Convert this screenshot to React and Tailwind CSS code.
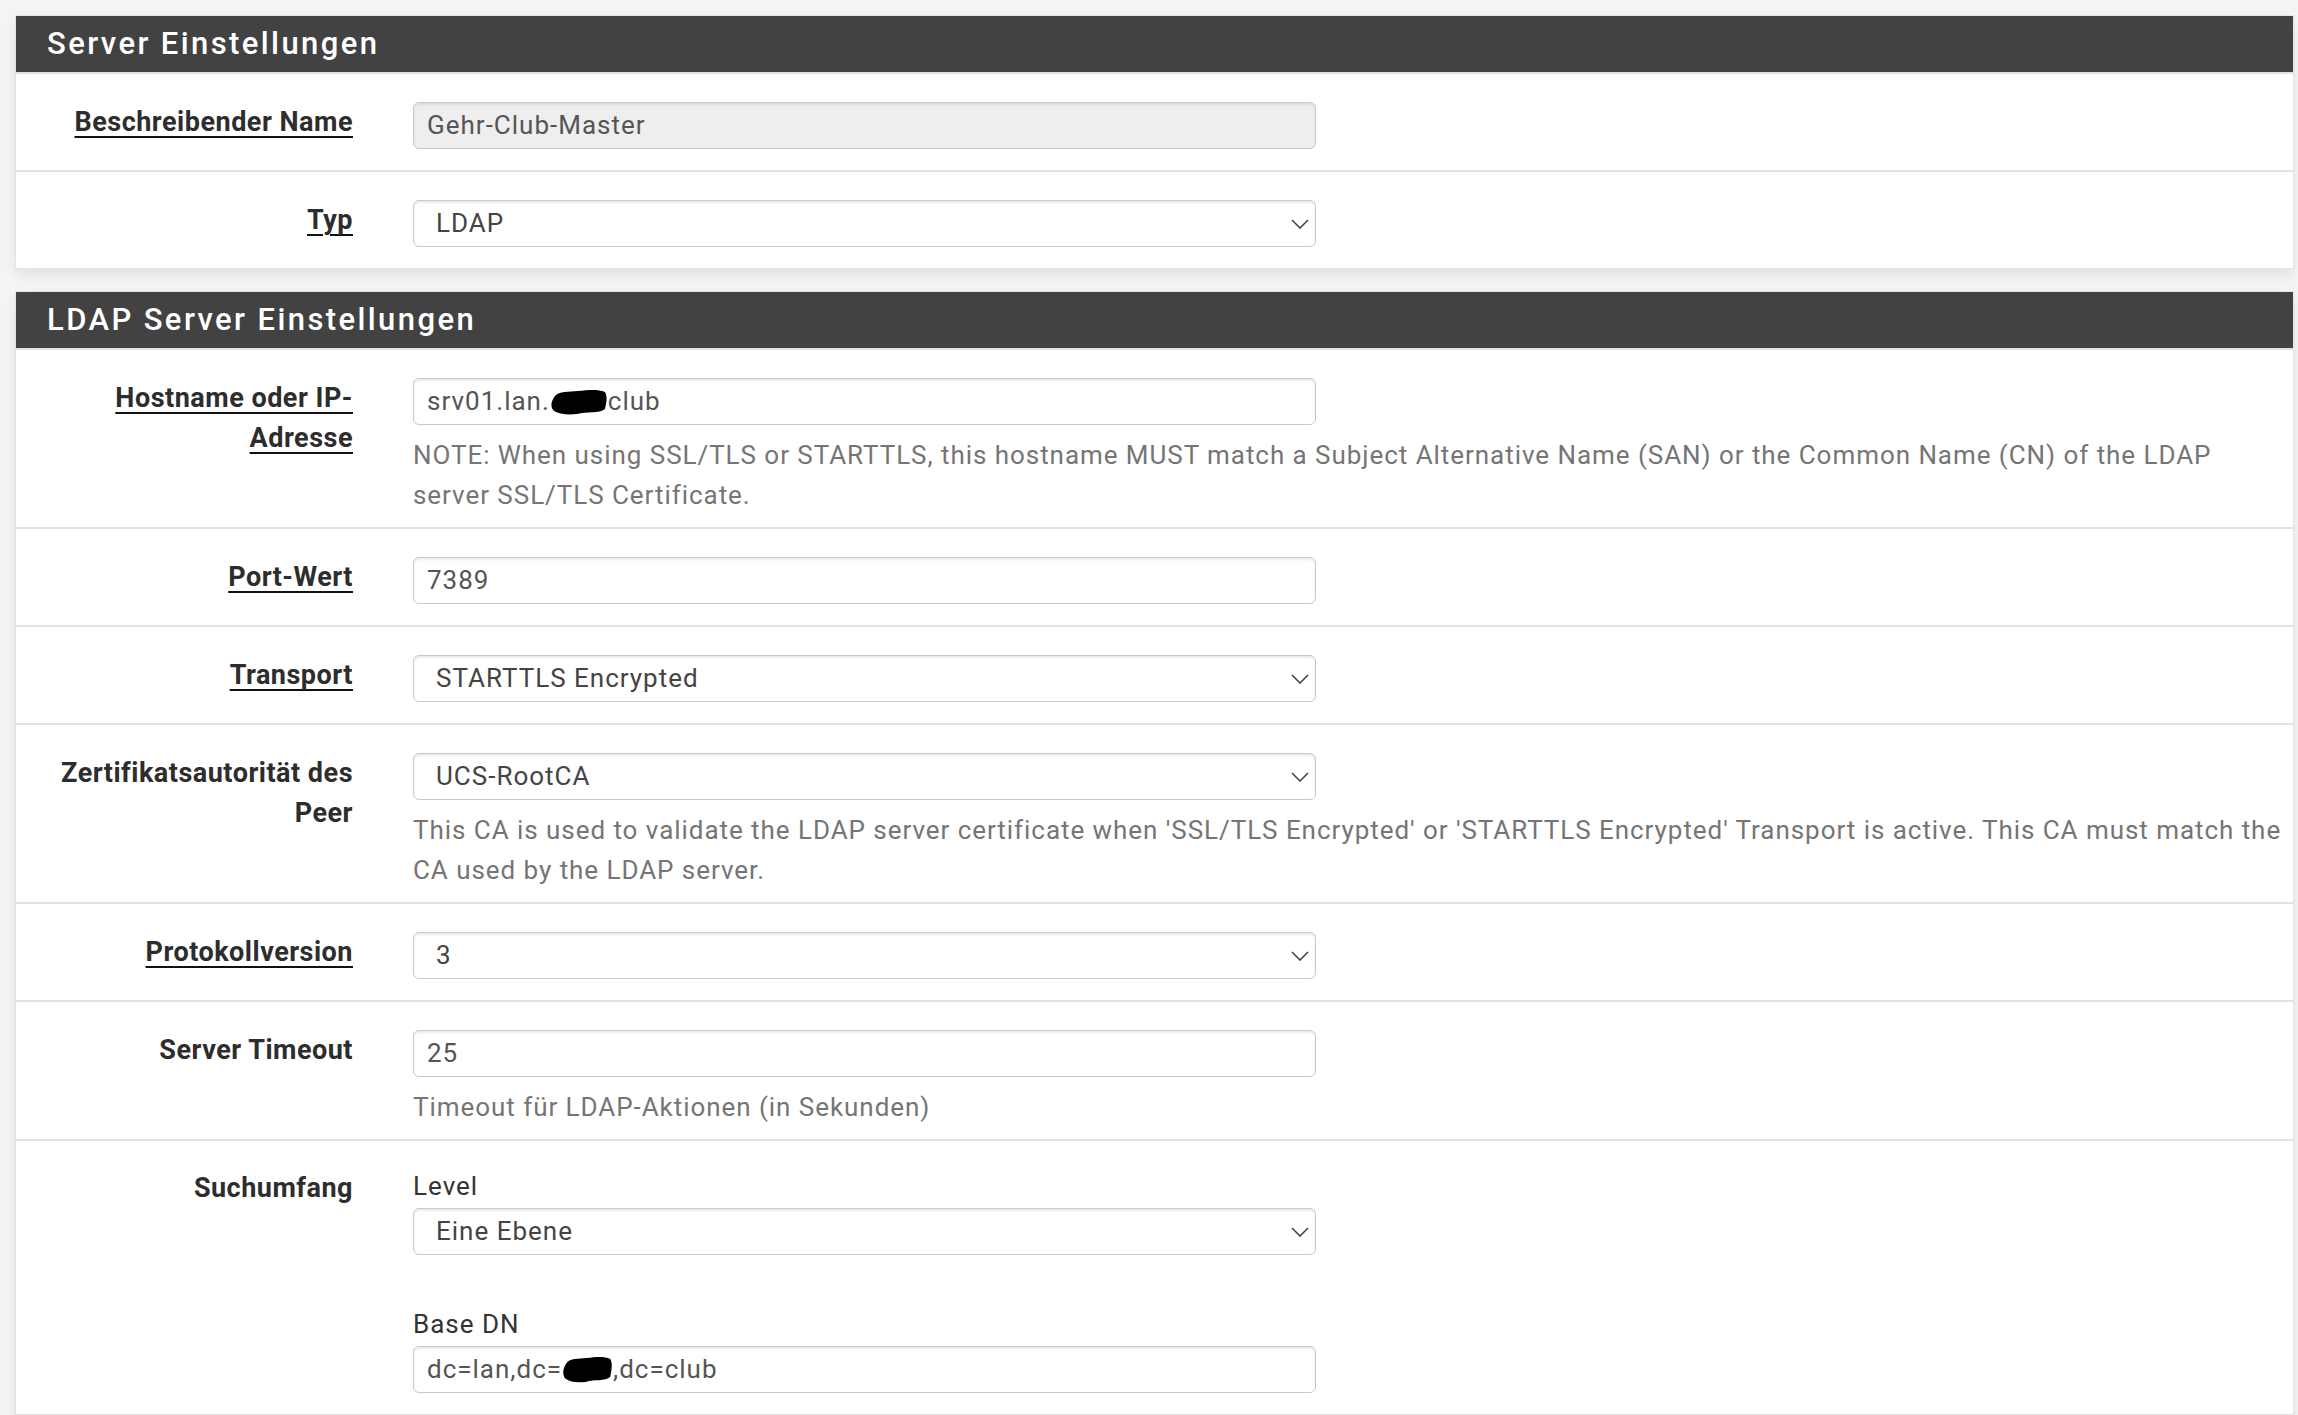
import React from "react";

function Blob({ w, h }) {
  return (
    <svg width={w} height={h} viewBox="0 0 58 26" preserveAspectRatio="none" className="inline-block shrink-0">
      <path
        d="M5 7 C9 2 19 3 28 2 C38 1 48 0 55 3 C58 8 56 15 55 20 C49 25 37 22 27 25 C17 26 9 25 4 22 C0 18 1 12 5 7 Z"
        fill="#000"
      />
    </svg>
  );
}

function Chevron() {
  return (
    <svg width="18" height="10" viewBox="0 0 18 10" className="shrink-0">
      <path d="M1 1 L9 9 L17 1" fill="none" stroke="#444" strokeWidth="1.6" />
    </svg>
  );
}

function Input({ children, disabled }) {
  return (
    <div
      className={`flex h-[47px] w-[903px] items-center whitespace-nowrap rounded-[6px] border border-[#c9c9c9] pl-[13px] text-[26px] tracking-[1px] text-[#555] shadow-[inset_0_2px_2px_rgba(0,0,0,0.08)] ${
        disabled ? "bg-[#eeeeee]" : "bg-white"
      }`}
    >
      {children}
    </div>
  );
}

function Select({ value }) {
  return (
    <div className="flex h-[47px] w-[903px] items-center justify-between rounded-[6px] border border-[#c9c9c9] bg-white pl-[14px] pr-[6px] text-[26px] tracking-[1px] text-[#444] shadow-[inset_0_2px_2px_rgba(0,0,0,0.08)]">
      <span className="pl-[8px]">{value}</span>
      <Chevron />
    </div>
  );
}

function Help({ children }) {
  return (
    <p className="mt-[10px] -mb-[9px] text-[26px] leading-[40px] tracking-[0.95px] text-[#757575]">{children}</p>
  );
}

function Row({ label, required, children, top = "pt-[28px]" }) {
  return (
    <div className={`flex border-t-2 border-[#e2e2e2] pb-[21px] ${top}`}>
      <div className="w-[337px] shrink-0 pl-[15px] text-right text-[27px] font-bold leading-[40px] tracking-[0.5px] text-[#2d2d2d]">
        {label.map((line, i) => (
          <div key={i}>
            {required ? (
              <span className="underline decoration-[#111] decoration-2 underline-offset-[5px]">{line}</span>
            ) : (
              line
            )}
          </div>
        ))}
      </div>
      <div className="ml-[60px] min-w-0 flex-1 pr-[4px]">{children}</div>
    </div>
  );
}

function Panel({ title, children }) {
  return (
    <div className="bg-white shadow-[0_6px_12px_rgba(0,0,0,0.09)] ring-1 ring-[#e4e4e4]">
      <div className="flex h-[56px] items-center bg-[#424242] px-[31px] text-[31px] font-medium tracking-[2.4px] text-white">
        {title}
      </div>
      {children}
    </div>
  );
}

export default function App() {
  return (
    <div className="min-h-screen bg-[#f4f4f4] pl-[16px] pt-[16px] font-[Roboto,sans-serif]">
      <div className="flex w-[2277px] flex-col gap-[24px]">
        <Panel title="Server Einstellungen">
          <Row label={["Beschreibender Name"]} required>
            <Input disabled>Gehr-Club-Master</Input>
          </Row>
          <Row label={["Typ"]} required>
            <Select value="LDAP" />
          </Row>
        </Panel>

        <Panel title="LDAP Server Einstellungen">
          <Row label={["Hostname oder IP-", "Adresse"]} required>
            <Input>
              <span>srv01.lan.</span>
              <Blob w={58} h={26} />
              <span>club</span>
            </Input>
            <Help>
              NOTE: When using SSL/TLS or STARTTLS, this hostname MUST match a Subject Alternative Name (SAN) or the
              Common Name (CN) of the LDAP server SSL/TLS Certificate.
            </Help>
          </Row>
          <Row label={["Port-Wert"]} required>
            <Input>7389</Input>
          </Row>
          <Row label={["Transport"]} required>
            <Select value="STARTTLS Encrypted" />
          </Row>
          <Row label={["Zertifikatsautorität des", "Peer"]}>
            <Select value="UCS-RootCA" />
            <Help>
              This CA is used to validate the LDAP server certificate when 'SSL/TLS Encrypted' or 'STARTTLS Encrypted'
              Transport is active. This CA must match the CA used by the LDAP server.
            </Help>
          </Row>
          <Row label={["Protokollversion"]} required>
            <Select value="3" />
          </Row>
          <Row label={["Server Timeout"]}>
            <Input>25</Input>
            <Help>Timeout für LDAP-Aktionen (in Sekunden)</Help>
          </Row>
          <Row label={["Suchumfang"]} top="pt-[27px]">
            <div className="text-[26px] leading-[37px] tracking-[1px] text-[#333]">Level</div>
            <div className="mt-[3px]">
              <Select value="Eine Ebene" />
            </div>
            <div className="mt-[51px] text-[26px] leading-[37px] tracking-[1px] text-[#333]">Base DN</div>
            <div className="mt-[3px]">
              <Input>
                <span>dc=lan,dc=</span>
                <Blob w={51} h={27} />
                <span>,dc=club</span>
              </Input>
            </div>
          </Row>
          <div className="h-[40px] border-t-2 border-[#e2e2e2]" />
        </Panel>
      </div>
    </div>
  );
}
